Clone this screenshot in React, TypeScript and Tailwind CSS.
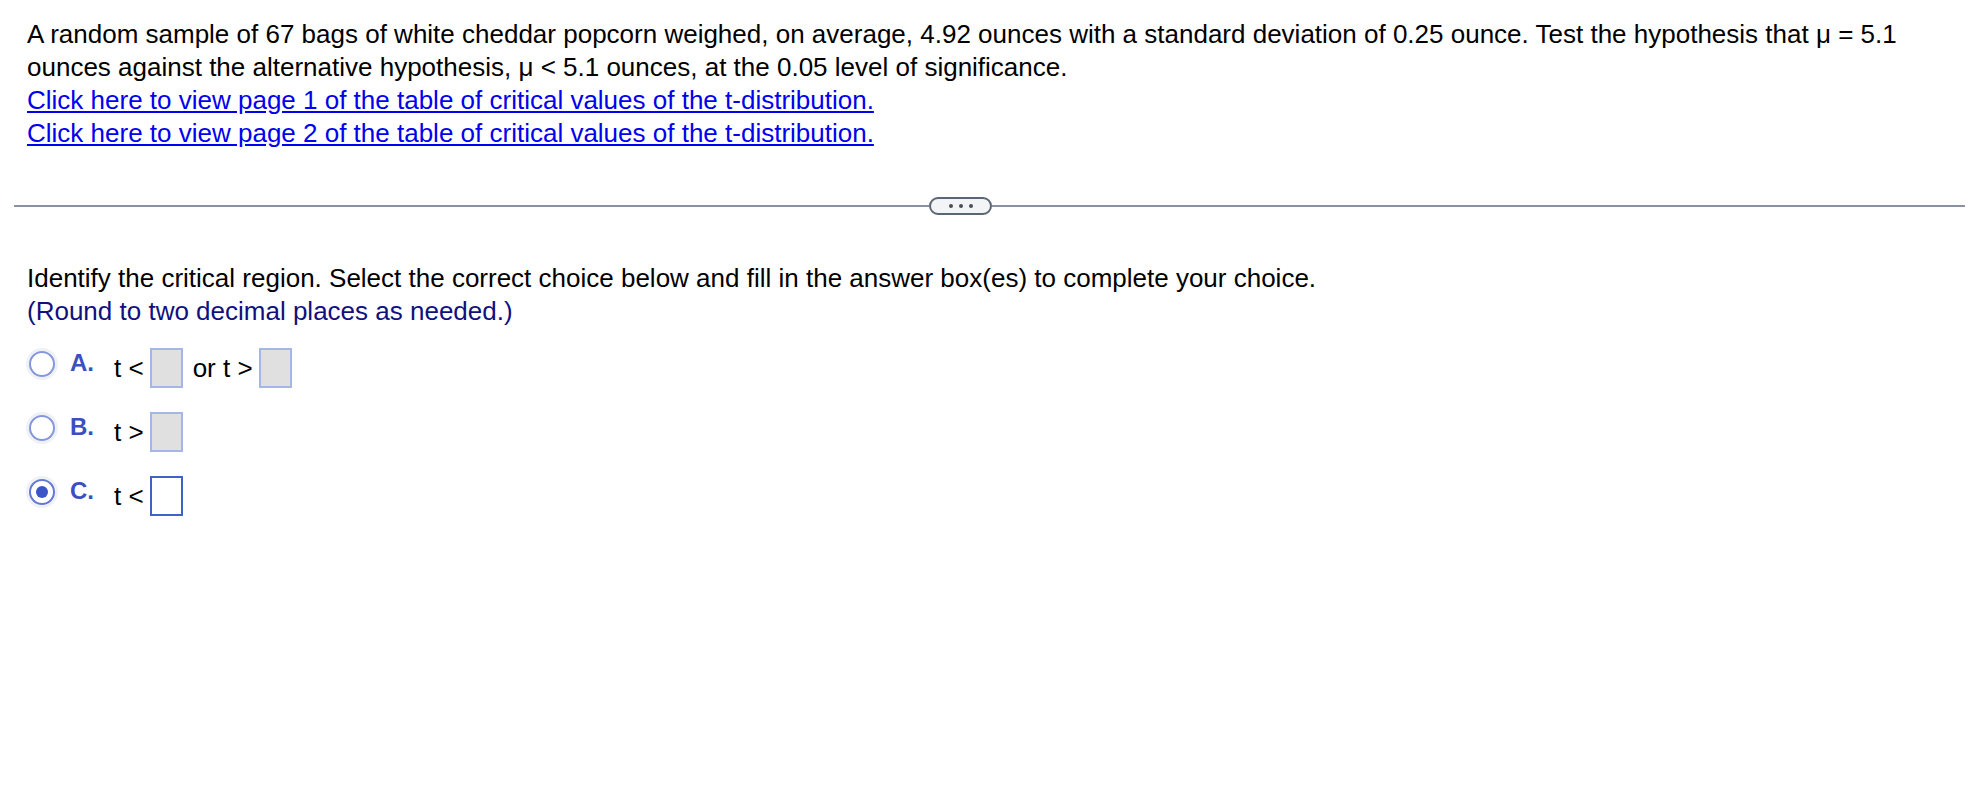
import React from "react";

const font = { fontFamily: '"Liberation Sans", Arial, sans-serif' };

type Choice = {
  letter: string;
  checked?: boolean;
  parts: ("box" | string)[];
};

const choices: Choice[] = [
  { letter: "A.", parts: ["t <", "box", "or t >", "box"] },
  { letter: "B.", parts: ["t >", "box"] },
  { letter: "C.", checked: true, parts: ["t <", "box"] },
];

const Radio = ({ checked }: { checked?: boolean }) => (
  <div className="relative mt-[3px] h-[26px] w-[26px] shrink-0 rounded-full shadow-[0_0_0_3px_rgba(220,224,232,0.45)]">
    <div
      className={`flex h-full w-full items-center justify-center rounded-full border-2 bg-white ${
        checked ? "border-[#6479d6]" : "border-[#8597dc]"
      }`}
    >
      {checked && <div className="h-[12px] w-[12px] rounded-full bg-[#3a55c6]" />}
    </div>
  </div>
);

const AnswerBox = ({ active }: { active?: boolean }) => (
  <div
    className={`h-[40px] w-[33px] shrink-0 border-2 ${
      active ? "border-[#3f62c6] bg-white" : "border-[#a3b6e6] bg-[#e0e0e0]"
    }`}
  />
);

export default function App() {
  return (
    <div className="min-h-screen bg-white text-black" style={font}>
      <div className="px-[27px] pt-[18px] text-[26px] leading-[33px]">
        <p>
          A random sample of 67 bags of white cheddar popcorn weighed, on average, 4.92 ounces with a
          standard deviation of 0.25 ounce. Test the hypothesis that μ = 5.1
          <br />
          ounces against the alternative hypothesis, μ &lt; 5.1 ounces, at the 0.05 level of significance.
        </p>
        <a href="#" className="block w-fit text-[#0000ee] underline">
          Click here to view page 1 of the table of critical values of the t-distribution.
        </a>
        <a href="#" className="block w-fit text-[#0000ee] underline">
          Click here to view page 2 of the table of critical values of the t-distribution.
        </a>
      </div>

      <div className="ml-[14px] mr-[17px] mt-[47px] flex h-[18px] items-center">
        <div className="h-[2px] w-[915px] bg-[#8a92a0]" />
        <div className="flex h-[18px] w-[63px] shrink-0 items-center justify-center gap-[6px] rounded-full border-2 border-[#5b6675] bg-[#f3f4f6]">
          <span className="h-[4px] w-[4px] rounded-full bg-[#4a4f57]" />
          <span className="h-[4px] w-[4px] rounded-full bg-[#4a4f57]" />
          <span className="h-[4px] w-[4px] rounded-full bg-[#4a4f57]" />
        </div>
        <div className="h-[2px] flex-1 bg-[#8a92a0]" />
      </div>

      <div className="mt-[47px] px-[27px] text-[26px] leading-[33px]">
        <p>
          Identify the critical region. Select the correct choice below and fill in the answer box(es) to
          complete your choice.
        </p>
        <p className="text-[#10107f]">(Round to two decimal places as needed.)</p>
      </div>

      <div className="mt-[20px] flex flex-col gap-[24px] pl-[29px]">
        {choices.map((c) => (
          <div key={c.letter} className="flex h-[40px] items-start">
            <Radio checked={c.checked} />
            <span className="ml-[15px] w-[44px] shrink-0 text-[24px] font-bold leading-[30px] text-[#3b4fc0]">
              {c.letter}
            </span>
            <div className="flex items-start text-[26px] leading-[40px]">
              {c.parts.map((p, i) =>
                p === "box" ? (
                  <div key={i} className="ml-[6px]">
                    <AnswerBox active={c.checked} />
                  </div>
                ) : (
                  <span key={i} className={i > 0 ? "ml-[10px]" : ""}>
                    {p}
                  </span>
                )
              )}
            </div>
          </div>
        ))}
      </div>
    </div>
  );
}
